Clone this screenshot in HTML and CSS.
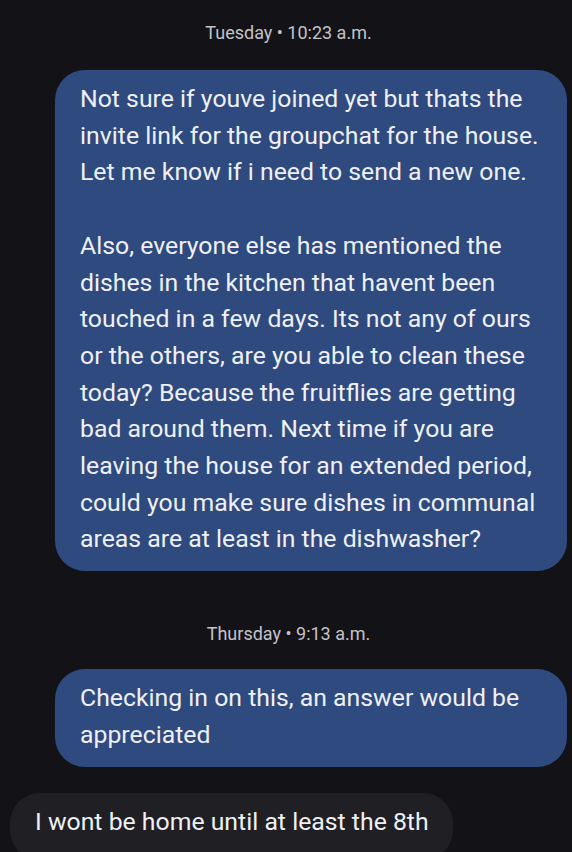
FILE: index.html
```html
<!DOCTYPE html>
<html lang="en">
<head>
    <meta charset="UTF-8">
    <title>Messages</title>
    <link rel="stylesheet" href="styles.css">
</head>
<body>
<div class="thread">
    <div class="stamp stamp-first">Tuesday • 10:23 a.m.</div>
    <div class="row row-out">
        <div class="bubble bubble-out">Not sure if youve joined yet but thats the invite link for the groupchat for the house. Let me know if i need to send a new one.<br><br>Also, everyone else has mentioned the dishes in the kitchen that havent been touched in a few days. Its not any of ours or the others, are you able to clean these today? Because the fruitflies are getting bad around them. Next time if you are leaving the house for an extended period, could you make sure dishes in communal areas are at least in the dishwasher?</div>
    </div>
    <div class="stamp">Thursday • 9:13 a.m.</div>
    <div class="row row-out">
        <div class="bubble bubble-out">Checking in on this, an answer would be appreciated</div>
    </div>
    <div class="row row-in">
        <div class="bubble bubble-in">I wont be home until at least the 8th</div>
    </div>
</div>
</body>
</html>
```
FILE: styles.css
```css
body {
    margin: 0;
    background: #131217;
    font-family: Roboto, "Noto Sans", sans-serif;
    color: #eef0f6;
    height: 852px;
    overflow: hidden;
}
.thread {
    display: flex;
    flex-direction: column;
    padding: 0 5px 0 10px;
}
.stamp {
    text-align: center;
    font-size: 18px;
    line-height: 21px;
    color: #c3c3c8;
    margin: 52px 0 25px;
}
.stamp-first {
    margin-top: 22px;
    margin-bottom: 27px;
}
.row {
    display: flex;
}
.row-out {
    justify-content: flex-end;
}
.row-in {
    justify-content: flex-start;
    margin-top: 26px;
}
.bubble {
    font-size: 24.8px;
    line-height: 36.7px;
    border-radius: 30px;
    padding: 11px 24px 13px 25px;
}
.bubble-out {
    background: #2f4a7e;
    width: 512px;
    box-sizing: border-box;
}
.bubble-in {
    background: #202024;
    padding-bottom: 20px;
}
```
